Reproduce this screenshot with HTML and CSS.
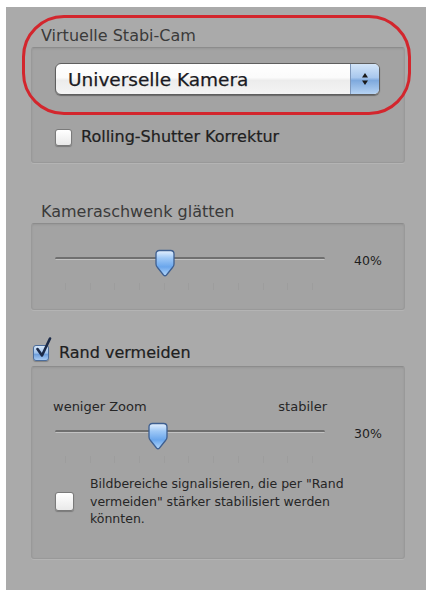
FILE: index.html
```html
<!DOCTYPE html>
<html lang="de">
<head>
<meta charset="utf-8">
<title>Stabilisierung</title>
<link rel="stylesheet" href="styles.css">
</head>
<body>
<div class="panel">
  <div class="group-label">Virtuelle Stabi-Cam</div>
  <div class="box box-cam">
    <div class="popup">
      <span class="popup-text">Universelle Kamera</span>
      <span class="stepper">
        <svg width="10" height="16" viewBox="0 0 10 16"><path d="M5 2 L8 6.5 H2 Z M5 14 L8 9.5 H2 Z" fill="#1a1a1a"/></svg>
      </span>
    </div>
    <div class="check-row">
      <span class="checkbox"></span>
      <span class="check-text">Rolling-Shutter Korrektur</span>
    </div>
  </div>

  <div class="group-label second">Kameraschwenk glätten</div>
  <div class="box box-pan">
    <div class="slider-row">
      <div class="slider">
        <div class="track"></div>
        <div class="ticks"><i></i><i></i><i></i><i></i><i></i><i></i><i></i><i></i><i></i><i></i><i></i></div>
        <svg class="thumb" style="left:99px" width="22" height="29" viewBox="0 0 22 29">
          <defs>
            <linearGradient id="tg1" x1="0" y1="0" x2="0" y2="1">
              <stop offset="0" stop-color="#e6f1ff"/>
              <stop offset="0.3" stop-color="#9ec8f6"/>
              <stop offset="0.65" stop-color="#6aa6ec"/>
              <stop offset="1" stop-color="#b4d7fb"/>
            </linearGradient>
          </defs>
          <path d="M2 5 Q2 1.5 5.5 1.5 H16.5 Q20 1.5 20 5 V15 Q20 17 18.5 18.5 L12.5 26 Q11 27.5 9.5 26 L3.5 18.5 Q2 17 2 15 Z" fill="url(#tg1)" stroke="#3e5f90" stroke-width="1.3"/>
        </svg>
      </div>
      <span class="value">40%</span>
    </div>
  </div>

  <div class="check-row group-check">
    <span class="checkbox checked">
      <svg class="checkmark" width="20" height="22" viewBox="0 0 20 22"><path d="M3.5 12 L8 18.5 L16 1.5" fill="none" stroke="#1b2a48" stroke-width="2.6" stroke-linecap="round" stroke-linejoin="round"/></svg>
    </span>
    <span class="check-text">Rand vermeiden</span>
  </div>
  <div class="box box-edge">
    <div class="range-labels">
      <span>weniger Zoom</span>
      <span>stabiler</span>
    </div>
    <div class="slider-row">
      <div class="slider">
        <div class="track"></div>
        <div class="ticks"><i></i><i></i><i></i><i></i><i></i><i></i><i></i><i></i><i></i><i></i><i></i></div>
        <svg class="thumb" style="left:92px" width="22" height="29" viewBox="0 0 22 29">
          <defs>
            <linearGradient id="tg2" x1="0" y1="0" x2="0" y2="1">
              <stop offset="0" stop-color="#e6f1ff"/>
              <stop offset="0.3" stop-color="#9ec8f6"/>
              <stop offset="0.65" stop-color="#6aa6ec"/>
              <stop offset="1" stop-color="#b4d7fb"/>
            </linearGradient>
          </defs>
          <path d="M2 5 Q2 1.5 5.5 1.5 H16.5 Q20 1.5 20 5 V15 Q20 17 18.5 18.5 L12.5 26 Q11 27.5 9.5 26 L3.5 18.5 Q2 17 2 15 Z" fill="url(#tg2)" stroke="#3e5f90" stroke-width="1.3"/>
        </svg>
      </div>
      <span class="value">30%</span>
    </div>
    <div class="check-row multi">
      <span class="checkbox big"></span>
      <span class="small-text">Bildbereiche signalisieren, die per "Rand<br>vermeiden" stärker stabilisiert werden<br>könnten.</span>
    </div>
  </div>

  <div class="highlight"></div>
</div>
</body>
</html>
```

FILE: styles.css
```css
html, body {
  margin: 0;
  padding: 0;
  background: #ffffff;
}

body {
  font-family: "DejaVu Sans", "Liberation Sans", sans-serif;
  color: #222;
}

.panel {
  position: relative;
  box-sizing: border-box;
  margin: 7px 0 0 6px;
  width: 420px;
  height: 583px;
  background: #aaaaaa;
  padding: 20px 0 0 25px;
  display: flex;
  flex-direction: column;
  align-items: flex-start;
}

.group-label {
  padding-left: 10px;
  font-size: 16px;
  line-height: 18px;
  height: 18px;
  margin-bottom: 2px;
  color: #3a3a3a;
  white-space: nowrap;
}

.group-label.second {
  margin-top: 40px;
}

.box {
  box-sizing: border-box;
  width: 374px;
  background: #a3a3a3;
  border: 1px solid #999;
  border-top-color: #8c8c8c;
  border-radius: 3px;
  box-shadow: inset 0 1px 2px rgba(0, 0, 0, 0.08), 0 1px 0 rgba(255, 255, 255, 0.12);
  padding: 15px 0 0 23px;
  display: flex;
  flex-direction: column;
  align-items: flex-start;
}

.box-cam {
  height: 116px;
}

.box-pan {
  height: 87px;
  padding-top: 29px;
}

.box-edge {
  height: 193px;
  padding-top: 32px;
}

/* popup */
.popup {
  box-sizing: border-box;
  width: 325px;
  height: 32px;
  border: 1px solid #5f5f5f;
  border-radius: 6px;
  background: linear-gradient(#ffffff 0%, #fbfbfb 45%, #ececec 55%, #f4f4f4 100%);
  box-shadow: 0 1px 1px rgba(0, 0, 0, 0.35);
  display: flex;
  align-items: center;
  justify-content: space-between;
  overflow: hidden;
}

.popup-text {
  padding-left: 12px;
  font-size: 18.5px;
  color: #1a1a22;
  -webkit-text-stroke: 0.25px #1a1a22;
  white-space: nowrap;
}

.stepper {
  width: 28px;
  height: 100%;
  border-left: 1px solid #7f98bb;
  background: linear-gradient(#d3e5f8 0%, #a9c8ee 45%, #7ea9dd 55%, #b6d3f3 100%);
  display: flex;
  align-items: center;
  justify-content: center;
}

/* checkboxes */
.check-row {
  display: flex;
  align-items: center;
  gap: 9px;
  margin-top: 33px;
}

.checkbox {
  position: relative;
  box-sizing: border-box;
  width: 17px;
  height: 17px;
  flex: none;
  border: 1px solid #7a7a7a;
  border-radius: 3px;
  background: linear-gradient(#ffffff, #e9e9e9);
  box-shadow: 0 1px 1px rgba(0, 0, 0, 0.25);
}

.checkbox.big {
  width: 19px;
  height: 19px;
}

.checkbox.checked {
  width: 16px;
  height: 16px;
  border-color: #4b6d9c;
  background: linear-gradient(#d8e8fa 0%, #9dc1ec 50%, #6f9fdc 60%, #a8cbf3 100%);
}

.checkmark {
  position: absolute;
  left: 0;
  top: -9px;
}

.check-text {
  font-size: 16px;
  line-height: 18px;
  color: #202020;
  -webkit-text-stroke: 0.2px #202020;
  white-space: nowrap;
}

.group-check {
  margin-top: 33px;
  margin-left: 2px;
  margin-bottom: 3px;
  gap: 10px;
  height: 20px;
}

.multi {
  margin-top: 11px;
  gap: 16px;
}

.small-text {
  font-size: 12.5px;
  line-height: 17.5px;
  color: #262626;
}

/* sliders */
.slider-row {
  display: flex;
  align-items: flex-start;
}

.slider {
  position: relative;
  width: 270px;
  height: 38px;
}

.track {
  margin-top: 4px;
  height: 2px;
  background: #6f6f6f;
  border-bottom: 1px solid #c2c2c2;
  border-radius: 2px;
}

.ticks {
  margin-top: 23px;
  padding: 0 12px 0 10px;
  height: 7px;
  display: flex;
  justify-content: space-between;
}

.ticks i {
  width: 1px;
  height: 7px;
  background: #999;
  opacity: 0.6;
}

.thumb {
  position: absolute;
  top: -4px;
}

.value {
  margin-left: 29px;
  font-size: 12.5px;
  line-height: 16px;
  color: #1e1e1e;
}

.range-labels {
  width: 274px;
  margin-left: -2px;
  margin-bottom: 11px;
  display: flex;
  justify-content: space-between;
  font-size: 13px;
  line-height: 16px;
  color: #262626;
}

/* annotation */
.highlight {
  position: absolute;
  left: 16px;
  top: 8px;
  width: 389px;
  height: 100px;
  box-sizing: border-box;
  border: 3.5px solid #d3262d;
  border-radius: 42px;
  pointer-events: none;
}
```
